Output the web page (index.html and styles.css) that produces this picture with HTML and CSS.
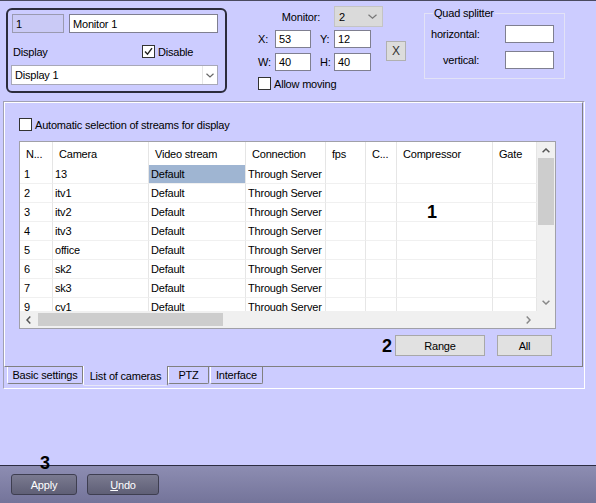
FILE: index.html
```html
<!DOCTYPE html>
<html lang="en">
<head>
  <meta charset="UTF-8">
  <meta name="viewport" content="width=device-width, initial-scale=1.0">
  <title>Monitor settings</title>
  <link rel="stylesheet" href="styles.css">
</head>
<body>
  <div class="topline"></div>

  <div class="header">
    <div class="monitor-box">
      <div class="mb-row">
        <div class="field id">1</div>
        <div class="field name">Monitor 1</div>
      </div>
      <div class="mb-row second">
        <div class="display-label">Display</div>
        <div class="check">
          <span class="box">
            <svg width="9" height="9" viewBox="0 0 9 9"><polyline points="1,4.5 3.5,7.2 8,1.2" fill="none" stroke="#222" stroke-width="1.4"/></svg>
          </span>
          <span>Disable</span>
        </div>
      </div>
      <div class="combo">
        <span class="txt">Display 1</span>
        <span class="arrow">
          <svg width="8" height="5" viewBox="0 0 8 5"><polyline points="0.5,0.8 4,4 7.5,0.8" fill="none" stroke="#666" stroke-width="1.2"/></svg>
        </span>
      </div>
    </div>

    <div class="geometry">
      <div class="mon-label">Monitor:</div>
      <div class="mon-select">
        <span class="txt">2</span>
        <svg width="9" height="5" viewBox="0 0 9 5"><polyline points="0.5,0.8 4.5,4.2 8.5,0.8" fill="none" stroke="#777" stroke-width="1.2"/></svg>
      </div>

      <div class="lbl r1 c1">X:</div>
      <div class="num r1 c2">53</div>
      <div class="lbl r1 c4">Y:</div>
      <div class="num r1 c5">12</div>

      <div class="lbl r2 c1">W:</div>
      <div class="num r2 c2">40</div>
      <div class="lbl r2 c4">H:</div>
      <div class="num r2 c5">40</div>

      <div class="x-btn">X</div>

      <div class="check allow">
        <span class="box"></span>
        <span>Allow moving</span>
      </div>
    </div>

    <div class="quad">
      <span class="quad-title">Quad splitter</span>
      <div class="quad-grid">
        <div>horizontal:</div>
        <div class="num wide"></div>
        <div class="indent">vertical:</div>
        <div class="num wide"></div>
      </div>
    </div>
  </div>

  <div class="frame">
    <div class="page">
      <div class="check">
        <span class="box"></span>
        <span>Automatic selection of streams for display</span>
      </div>

      <div class="grid">
        <div class="table-view">
          <div class="thead">
            <div>N...</div><div>Camera</div><div>Video stream</div><div>Connection</div>
            <div>fps</div><div>C...</div><div>Compressor</div><div>Gate</div>
          </div>
          <div class="trow">
            <div class="n">1</div><div>13</div><div class="sel">Default</div><div>Through Server</div>
            <div></div><div></div><div></div><div></div>
          </div>
          <div class="trow">
            <div class="n">2</div><div>itv1</div><div>Default</div><div>Through Server</div>
            <div></div><div></div><div></div><div></div>
          </div>
          <div class="trow">
            <div class="n">3</div><div>itv2</div><div>Default</div><div>Through Server</div>
            <div></div><div></div><div></div><div></div>
          </div>
          <div class="trow">
            <div class="n">4</div><div>itv3</div><div>Default</div><div>Through Server</div>
            <div></div><div></div><div></div><div></div>
          </div>
          <div class="trow">
            <div class="n">5</div><div>office</div><div>Default</div><div>Through Server</div>
            <div></div><div></div><div></div><div></div>
          </div>
          <div class="trow">
            <div class="n">6</div><div>sk2</div><div>Default</div><div>Through Server</div>
            <div></div><div></div><div></div><div></div>
          </div>
          <div class="trow">
            <div class="n">7</div><div>sk3</div><div>Default</div><div>Through Server</div>
            <div></div><div></div><div></div><div></div>
          </div>
          <div class="trow">
            <div class="n">9</div><div>cv1</div><div>Default</div><div>Through Server</div>
            <div></div><div></div><div></div><div></div>
          </div>
        </div>

        <div class="vscroll">
          <span class="sb-btn">
            <svg width="8" height="5" viewBox="0 0 8 5"><polyline points="0.6,4.3 4,1 7.4,4.3" fill="none" stroke="#555" stroke-width="1.5"/></svg>
          </span>
          <span class="v-thumb"></span>
          <span class="sb-btn">
            <svg width="8" height="5" viewBox="0 0 8 5"><polyline points="0.6,0.7 4,4 7.4,0.7" fill="none" stroke="#888" stroke-width="1.5"/></svg>
          </span>
        </div>

        <div class="hscroll">
          <span class="sb-btn">
            <svg width="5" height="8" viewBox="0 0 5 8"><polyline points="4.3,0.6 1,4 4.3,7.4" fill="none" stroke="#555" stroke-width="1.5"/></svg>
          </span>
          <span class="h-thumb"></span>
          <span class="sb-btn end">
            <svg width="5" height="8" viewBox="0 0 5 8"><polyline points="0.7,0.6 4,4 0.7,7.4" fill="none" stroke="#888" stroke-width="1.5"/></svg>
          </span>
        </div>

        <div class="corner"></div>
      </div>

      <div class="actions">
        <span class="mark">2</span>
        <div class="btn range">Range</div>
        <div class="btn all">All</div>
      </div>
    </div>

    <div class="tabs">
      <div class="tab basic">Basic settings</div>
      <div class="tab list active">List of cameras</div>
      <div class="tab ptz">PTZ</div>
      <div class="tab iface">Interface</div>
    </div>
  </div>

  <div class="spacer"></div>

  <div class="bottom-bar">
    <div class="dark-btn apply">Apply</div>
    <div class="dark-btn undo"><span class="u">U</span>ndo</div>
  </div>

  <span class="mark note-1">1</span>
  <span class="mark note-3">3</span>
</body>
</html>
```

FILE: styles.css
```css
* {
  box-sizing: border-box;
}
html, body {
  margin: 0;
  padding: 0;
}
body {
  width: 596px;
  height: 503px;
  overflow: hidden;
  position: relative;
  display: flex;
  flex-direction: column;
  background: #ccccff;
  color: #000;
  font-family: "Liberation Sans", Arial, sans-serif;
  font-size: 11px;
  letter-spacing: -0.2px;
}
.topline {
  height: 1px;
  background: #4a4a60;
}

/* top area */
.header {
  height: 100px;
  display: flex;
  align-items: flex-start;
}
.monitor-box {
  margin: 7px 0 0 6px;
  width: 221px;
  height: 85px;
  border: 2px solid #2c2c3c;
  border-radius: 6px;
  padding: 4px 7px 0 4px;
}
.mb-row {
  display: flex;
  align-items: center;
}
.mb-row.second {
  margin-top: 12px;
  height: 13px;
}
.field, .num {
  height: 19px;
  border: 1px solid #7f7f90;
  background: #fff;
  padding: 0 3px;
  display: flex;
  align-items: center;
  white-space: nowrap;
}
.field.id {
  width: 52px;
  background: #cacaf6;
  border-color: #9a9ab0;
}
.field.name {
  width: 149px;
  margin-left: 5px;
}
.display-label {
  width: 130px;
  padding-left: 1px;
}
.check {
  display: flex;
  align-items: center;
  gap: 3px;
  white-space: nowrap;
}
.box {
  width: 13px;
  height: 13px;
  border: 1px solid #333;
  background: #fff;
  display: flex;
  align-items: center;
  justify-content: center;
}
.combo {
  margin: 7px 0 0 -1px;
  width: 207px;
  height: 20px;
  background: #fff;
  border: 1px solid #a8a8b8;
  display: flex;
  align-items: center;
  padding-left: 3px;
}
.combo .txt {
  flex: 1;
}
.combo .arrow {
  width: 15px;
  height: 100%;
  display: flex;
  align-items: center;
  justify-content: center;
  border-left: 1px solid #e6e6e6;
}

.geometry {
  margin: 5px 0 0 31px;
  display: grid;
  grid-template-columns: 17px 36px 9px 14px 37px 15px 20px;
  grid-template-rows: 21px 3px 18px 5px 18px 6px 13px;
}
.mon-label {
  grid-column: 1 / 5;
  grid-row: 1;
  align-self: center;
  text-align: right;
  padding-right: 14px;
}
.mon-select {
  grid-column: 5 / 8;
  grid-row: 1;
  width: 49px;
  background: #dadada;
  border: 1px solid #c4c4c4;
  display: flex;
  align-items: center;
  justify-content: space-between;
  padding: 0 5px 0 4px;
}
.lbl {
  align-self: center;
}
.num {
  height: 18px;
}
.r1 { grid-row: 3; }
.r2 { grid-row: 5; }
.c1 { grid-column: 1; }
.c2 { grid-column: 2; }
.c4 { grid-column: 4; }
.c5 { grid-column: 5; }
.x-btn {
  grid-column: 7;
  grid-row: 3 / 6;
  align-self: center;
  height: 20px;
  background: #dcdcdc;
  border: 1px solid #b0b0b0;
  display: flex;
  align-items: center;
  justify-content: center;
  font-size: 12px;
  color: #333;
}
.allow {
  grid-column: 1 / 8;
  grid-row: 7;
}

.quad {
  position: relative;
  margin: 12px 0 0 18px;
  width: 141px;
  height: 66px;
  border: 1px solid #e2e2f6;
  padding: 10px 0 0 6px;
}
.quad-title {
  position: absolute;
  top: -7px;
  left: 8px;
  padding: 0 1px;
  line-height: 13px;
  background: #ccccff;
}
.quad-grid {
  display: grid;
  grid-template-columns: 74px 49px;
  grid-auto-rows: 19px;
  row-gap: 7px;
  align-items: center;
}
.indent {
  padding-left: 12px;
}

/* tab control */
.frame {
  margin-left: 3px;
  width: 582px;
  height: 288px;
  border: 1px solid;
  border-color: #a0a0b4 #fff #fff #a0a0b4;
  padding-right: 1px;
}
.page {
  height: 265px;
  border: 1px solid;
  border-color: #fff #808080 #808080 #fff;
  padding: 15px 0 0 14px;
}
.grid {
  margin-top: 10px;
  width: 537px;
  height: 188px;
  border: 1px solid #a0a0a8;
  background: #fff;
  display: grid;
  grid-template-columns: 517px 18px;
  grid-template-rows: 169px 17px;
}
.table-view {
  overflow: hidden;
}
.thead, .trow {
  display: grid;
  grid-template-columns: 33px 96px 97px 80px 40px 31px 96px 44px;
}
.thead > div {
  height: 23px;
  border-right: 1px solid #e5e5e5;
  padding-left: 6px;
  display: flex;
  align-items: center;
  white-space: nowrap;
}
.trow > div {
  height: 19px;
  border-right: 1px solid #e6e6e6;
  border-bottom: 1px solid #f0f0f0;
  padding-left: 2px;
  display: flex;
  align-items: center;
  white-space: nowrap;
  overflow: hidden;
}
.trow > .n {
  padding-left: 4px;
}
.trow > .sel {
  background: #9fb5d2;
}
.vscroll {
  background: #f0f0f0;
  display: flex;
  flex-direction: column;
  align-items: center;
}
.hscroll {
  background: #f0f0f0;
  display: flex;
  align-items: center;
}
.corner {
  background: #f0f0f0;
}
.sb-btn {
  width: 17px;
  height: 17px;
  flex: none;
  display: flex;
  align-items: center;
  justify-content: center;
}
.v-thumb {
  width: 16px;
  height: 67px;
  margin-top: -1px;
  background: #cdcdcd;
}
.vscroll .sb-btn:last-child {
  margin-top: auto;
}
.h-thumb {
  width: 185px;
  height: 13px;
  margin-left: 1px;
  background: #cdcdcd;
}
.sb-btn.end {
  margin-left: auto;
}
.actions {
  margin-top: 6px;
  padding-right: 30px;
  display: flex;
  align-items: center;
  justify-content: flex-end;
}
.mark {
  font-size: 18px;
  font-weight: bold;
  line-height: 18px;
  letter-spacing: 0;
}
.actions .mark {
  margin-right: 3px;
}
.btn {
  height: 21px;
  background: #e1e1e1;
  border: 1px solid #a8a8a8;
  display: flex;
  align-items: center;
  justify-content: center;
}
.btn.range {
  width: 90px;
}
.btn.all {
  width: 55px;
  margin-left: 12px;
}
.tabs {
  display: flex;
  align-items: flex-start;
  padding-left: 3px;
}
.tab {
  position: relative;
  height: 17px;
  border: 1px solid #808080;
  border-top: none;
  border-left-color: #fff;
  border-radius: 0 0 2px 2px;
  display: flex;
  align-items: center;
  justify-content: center;
  white-space: nowrap;
}
.tab.active {
  margin-top: -1px;
  height: 20px;
  background: #ccccff;
  border-bottom-color: #e8e8f8;
}
.tab.basic { width: 76px; }
.tab.list { width: 85px; }
.tab.ptz { width: 41px; }
.tab.iface { width: 53px; margin-left: 1px; }

.spacer {
  flex: 1;
}

/* bottom buttons */
.bottom-bar {
  height: 38px;
  border-top: 1px solid #2d2d42;
  background: linear-gradient(#8d8db2, #74749a);
  padding: 8px 0 0 11px;
  display: flex;
  align-items: flex-start;
  gap: 10px;
}
.dark-btn {
  height: 21px;
  border: 1px solid #3e3e50;
  border-radius: 3px;
  background: linear-gradient(#7a7a90, #5f5f76);
  color: #fff;
  display: flex;
  align-items: center;
  justify-content: center;
}
.dark-btn.apply { width: 66px; }
.dark-btn.undo { width: 72px; }
.u {
  text-decoration: underline;
}

/* annotation numbers drawn over the form */
.note-1 {
  position: absolute;
  left: 427px;
  top: 203px;
}
.note-3 {
  position: absolute;
  left: 40px;
  top: 454px;
}
```
